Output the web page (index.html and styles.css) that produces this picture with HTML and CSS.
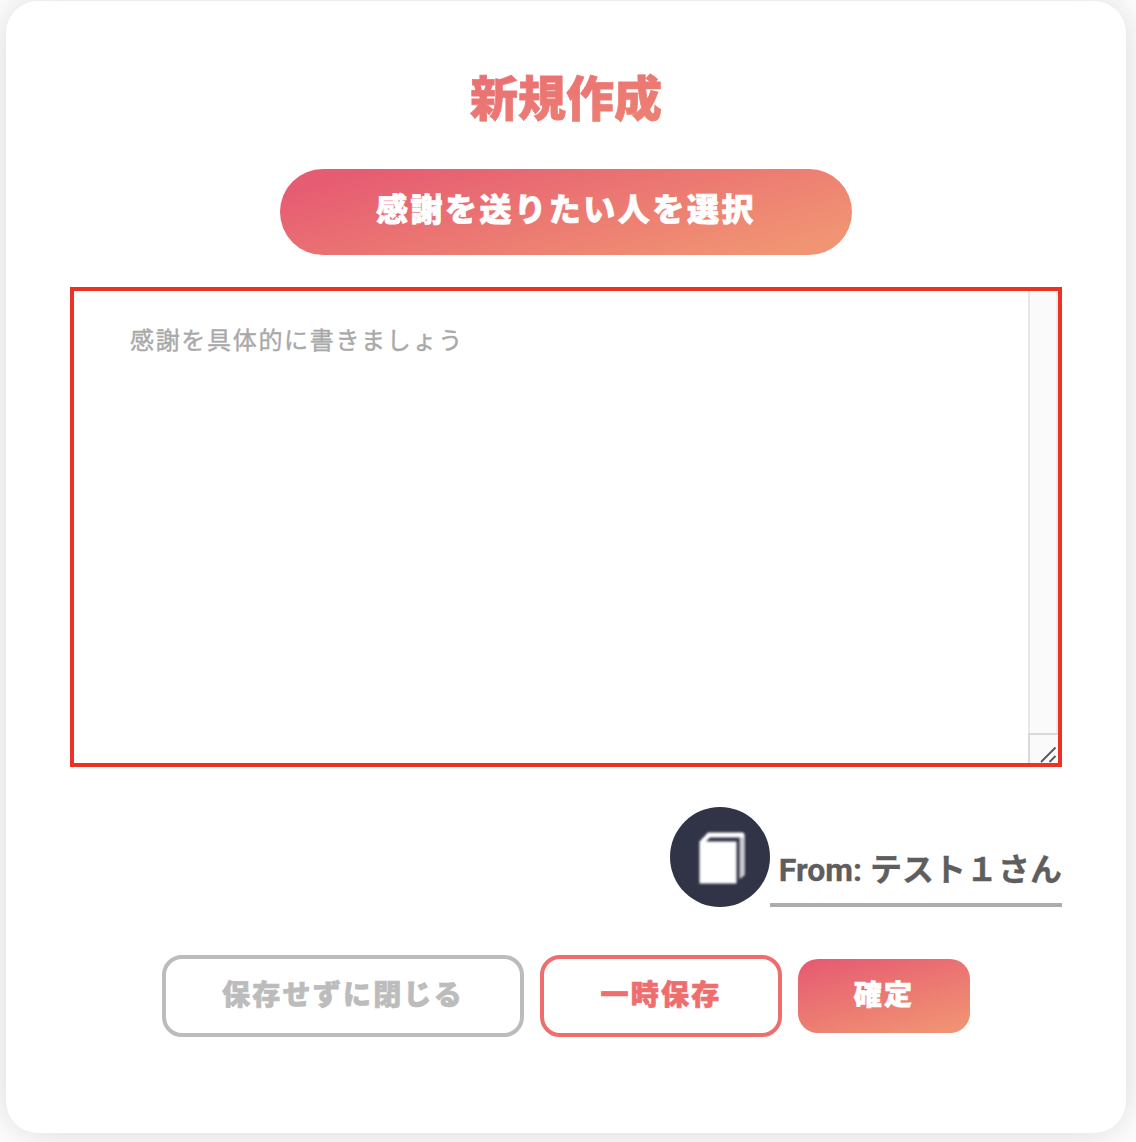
FILE: index.html
```html
<!DOCTYPE html>
<html lang="ja">
<head>
<meta charset="utf-8">
<title>新規作成</title>
<link rel="stylesheet" href="styles.css">
</head>
<body>
<main class="card">
  <h1 class="title">新規作成</h1>
  <button class="select-button" type="button">感謝を送りたい人を選択</button>
  <div class="message">
    <div class="message-text">感謝を具体的に書きましょう</div>
    <div class="scrollbar">
      <div class="track"></div>
      <div class="corner">
        <svg width="28" height="28" viewBox="0 0 28 28"><path d="M11 27 25.500 12.500M19.500 27l6-6" fill="none" stroke="#58585c" stroke-width="1.800"/></svg>
      </div>
    </div>
  </div>
  <div class="sender">
    <svg class="avatar" width="100" height="100" viewBox="0 0 100 100">
      <defs><filter id="soft"><feGaussianBlur stdDeviation="0.900"/></filter></defs>
      <circle cx="50" cy="50" r="50" fill="#313447"/>
      <g filter="url(#soft)">
        <path d="M29.500 34.500 38 25.500H72Q74.500 25.500 74.500 28V68L70.500 71.500V30.500H40L36 34.500H66.500V76.500H29.500Z" fill="#fff"/>
        <path d="M69.500 30.500H74.500V68L69.500 72Z" fill="#c9c9cf"/>
      </g>
    </svg>
    <p class="sender-name">From: テスト１さん</p>
  </div>
  <div class="actions">
    <button class="action close" type="button">保存せずに閉じる</button>
    <button class="action draft" type="button">一時保存</button>
    <button class="action confirm" type="button">確定</button>
  </div>
</main>
</body>
</html>
```
FILE: styles.css
```css
* { box-sizing: border-box; }
body {
  margin: 0;
  height: 1142px;
  overflow: hidden;
  padding: 1px 10px 0 6px;
  background: #fff;
  font-family: "Noto Sans CJK JP", sans-serif;
}
.card {
  height: 1132px;
  padding: 60px 64px 0;
  border-radius: 32px;
  background: #fff;
  box-shadow: 0 0 40px rgba(0, 0, 0, 0.16);
  display: flex;
  flex-direction: column;
  align-items: center;
}
.title {
  width: 100%;
  margin: 0;
  height: 76px;
  line-height: 68px;
  text-align: center;
  font-size: 48px;
  font-weight: 900;
  color: transparent;
  -webkit-text-stroke: 0.8px transparent;
  background: linear-gradient(165deg, #e65c72 5%, #f19473 95%);
  background-clip: text;
}
button {
  border: 0;
  font-family: inherit;
  font-weight: 900;
  letter-spacing: 0.08em;
  white-space: nowrap;
  -webkit-text-stroke: 0.7px currentColor;
}
.select-button {
  width: 572px;
  height: 86px;
  margin-top: 32px;
  padding: 0 0 11px;
  border-radius: 43px;
  background: linear-gradient(165deg, #e65c72 10%, #f19473 90%);
  color: #fff;
  font-size: 32px;
}
.message {
  width: 992px;
  height: 480px;
  margin-top: 32px;
  border: 4px solid #eb3223;
  display: flex;
}
.message-text {
  flex: 1;
  padding: 30px 56px;
  font-size: 24px;
  line-height: 36px;
  letter-spacing: 0.07em;
  color: #a9a9a9;
  -webkit-text-stroke: 0.4px currentColor;
}
.scrollbar {
  width: 30px;
  display: flex;
  flex-direction: column;
}
.track {
  flex: 1;
  background: #fafafa;
  border-left: 2px solid #e8e8e8;
  border-right: 2px solid #ededed;
}
.corner {
  height: 30px;
  border-top: 2px solid #d9d9d9;
  border-left: 2px solid #d9d9d9;
  background: #fafafa;
}
.corner svg { display: block; }
.sender {
  align-self: flex-end;
  height: 100px;
  margin-top: 40px;
  display: flex;
  align-items: flex-end;
}
.avatar { display: block; }
.sender-name {
  width: 292px;
  height: 64px;
  margin: 0;
  line-height: 54px;
  border-bottom: 4px solid #acacac;
  text-align: right;
  white-space: nowrap;
  font-family: Roboto, "Noto Sans CJK JP", sans-serif;
  font-size: 32px;
  font-weight: 700;
  color: #5e5e5e;
  -webkit-text-stroke: 0.3px currentColor;
}
.actions {
  margin-top: 48px;
  display: flex;
  align-items: center;
  gap: 16px;
}
.action {
  padding: 0 0 6px;
  border-radius: 20px;
  font-size: 28px;
}
.close {
  width: 362px;
  height: 82px;
  border: 4px solid #bcbcbc;
  background: #fff;
  color: #bcbcbc;
}
.draft {
  width: 242px;
  height: 82px;
  border: 4px solid #ee6e6e;
  background: #fff;
  color: #ee6e6e;
}
.confirm {
  width: 172px;
  height: 74px;
  background: linear-gradient(165deg, #e65c72 5%, #f19473 95%);
  color: #fff;
}
```
